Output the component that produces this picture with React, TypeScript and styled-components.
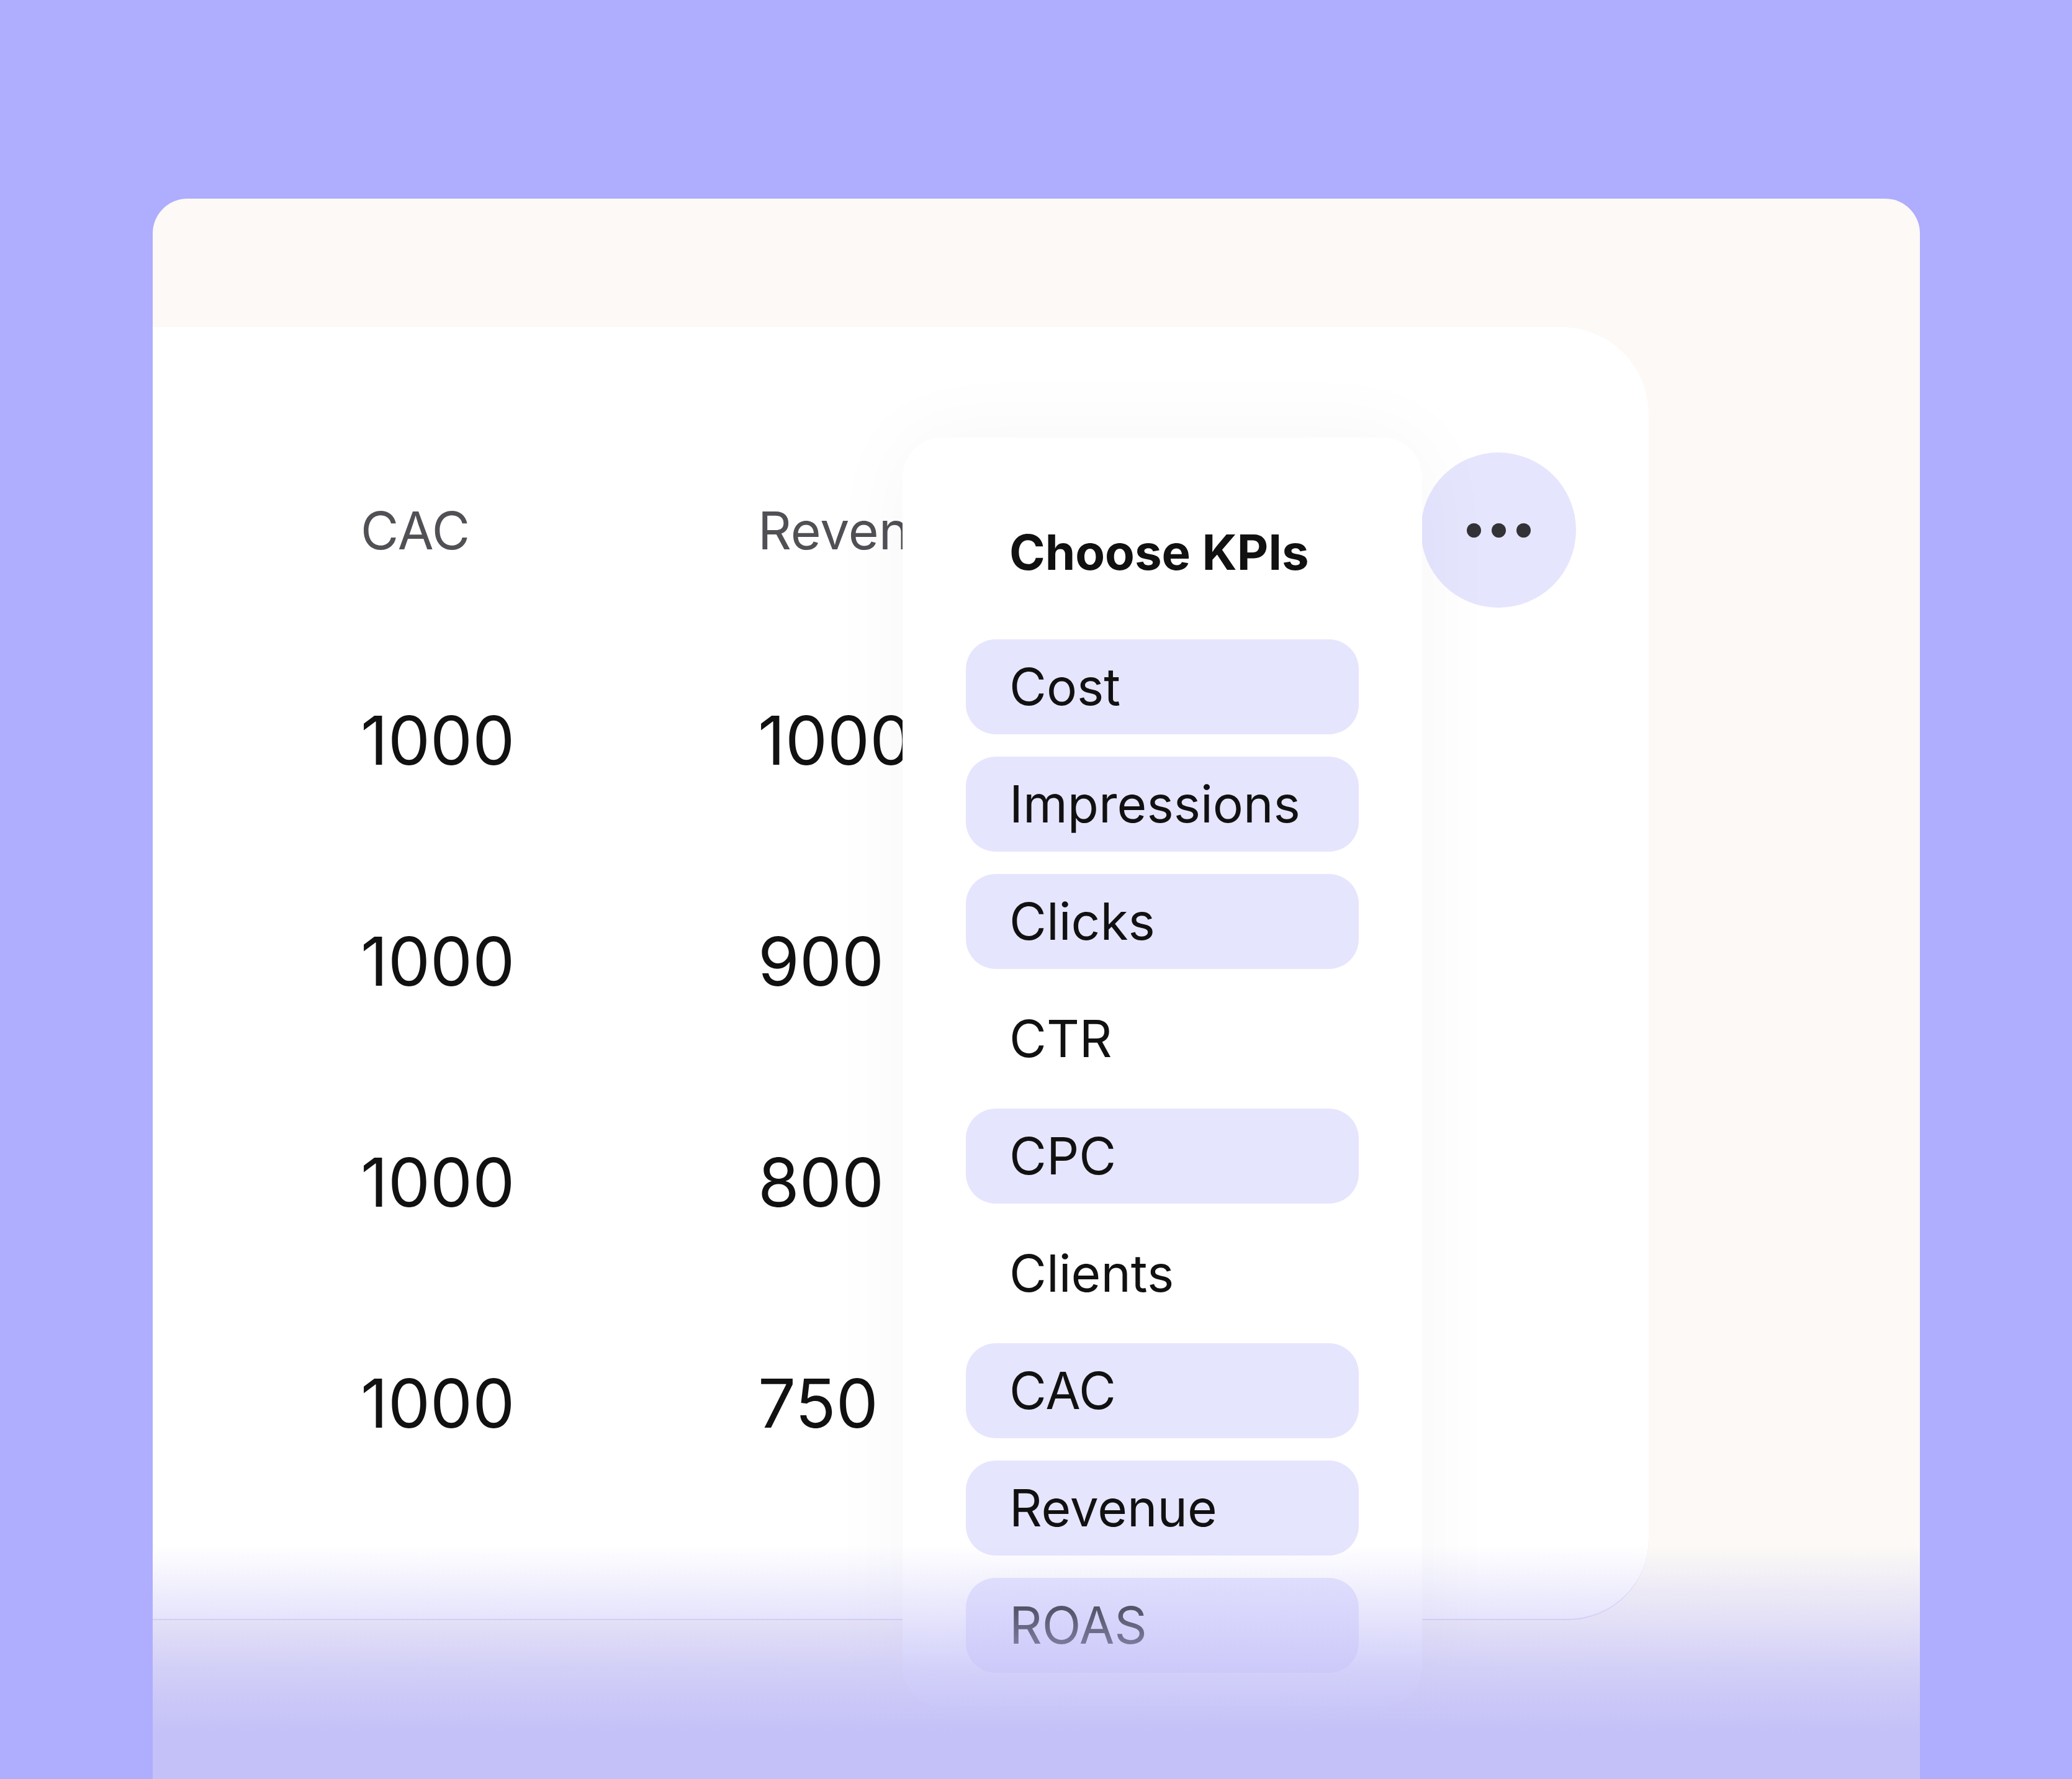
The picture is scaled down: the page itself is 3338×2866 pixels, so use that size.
import styled, { createGlobalStyle } from 'styled-components';

const GlobalStyle = createGlobalStyle`
  html, body {
    margin: 0;
    padding: 0;
  }
  body {
    background: #aeadfe;
    font-family: Inter, "Noto Sans", sans-serif;
    color: #111;
  }
`;

const Page = styled.div`
  width: 3338px;
  height: 2866px;
  overflow: hidden;
  padding: 320px 0 0 246px;
  box-sizing: border-box;
  background: #aeadfe;
`;

const Card = styled.div`
  position: relative;
  width: 2847px;
  height: 2600px;
  padding-top: 207px;
  box-sizing: border-box;
  background: #fcf9f6;
  border-radius: 56px 56px 0 0;
`;

const Panel = styled.div`
  width: 2410px;
  height: 2083px;
  display: flex;
  align-items: flex-start;
  background: #fff;
  border-radius: 0 140px 130px 0;
  border-bottom: 2px solid #dcdaf6;
  box-sizing: border-box;
`;

const Table = styled.div`
  width: 1208px;
  flex-shrink: 0;
  overflow: hidden;
  padding: 167px 0 0 335px;
  box-sizing: border-box;
  display: grid;
  grid-template-columns: 640px 640px;
  grid-template-rows: 320px repeat(4, 356px);
`;

const HeadCell = styled.div`
  display: flex;
  align-items: center;
  font-size: 84px;
  color: #505055;
  white-space: nowrap;
`;

const Cell = styled.div`
  display: flex;
  align-items: center;
  font-size: 108px;
  color: #111;
  white-space: nowrap;
`;

const Popup = styled.div`
  position: relative;
  z-index: 1;
  flex-shrink: 0;
  width: 837px;
  height: 2044px;
  margin-top: 178px;
  padding: 125px 102px 0;
  box-sizing: border-box;
  background: #fff;
  border-radius: 64px;
  box-shadow: 0 0 140px rgba(40, 30, 80, 0.04);
`;

const Title = styled.div`
  padding-left: 70px;
  font-size: 78px;
  font-weight: 700;
  line-height: 120px;
  color: #111;
`;

const List = styled.div`
  margin-top: 80px;
  display: flex;
  flex-direction: column;
  gap: 36px;
`;

const Chip = styled.div<{ $on: boolean }>`
  height: 153px;
  padding-left: 70px;
  display: flex;
  align-items: center;
  border-radius: 48px;
  font-size: 82px;
  color: #111;
  background: ${(p) => (p.$on ? '#e6e5fe' : 'transparent')};
`;

const MoreButton = styled.div`
  flex-shrink: 0;
  width: 250px;
  height: 250px;
  margin: 202px 0 0 -2px;
  border-radius: 50%;
  background: #e6e5fe;
  display: flex;
  align-items: center;
  justify-content: center;
  gap: 17px;
`;

const Dot = styled.span`
  width: 23px;
  height: 23px;
  border-radius: 50%;
  background: #333236;
`;

const Fade = styled.div`
  position: absolute;
  z-index: 2;
  left: 0;
  right: 0;
  top: 2170px;
  bottom: 0;
  pointer-events: none;
  background: linear-gradient(
    to bottom,
    rgba(196, 193, 248, 0) 0px,
    rgba(196, 193, 248, 0.75) 200px,
    rgba(196, 193, 248, 1) 300px
  );
`;

const rows = [
  ['1000', '1000'],
  ['1000', '900'],
  ['1000', '800'],
  ['1000', '750'],
];

const kpis = [
  { name: 'Cost', on: true },
  { name: 'Impressions', on: true },
  { name: 'Clicks', on: true },
  { name: 'CTR', on: false },
  { name: 'CPC', on: true },
  { name: 'Clients', on: false },
  { name: 'CAC', on: true },
  { name: 'Revenue', on: true },
  { name: 'ROAS', on: true },
];

export default function App() {
  return (
    <>
      <GlobalStyle />
      <Page>
        <Card>
          <Panel>
            <Table>
              <HeadCell>CAC</HeadCell>
              <HeadCell>Revenue</HeadCell>
              {rows.map((r, i) => [
                <Cell key={`a${i}`}>{r[0]}</Cell>,
                <Cell key={`b${i}`}>{r[1]}</Cell>,
              ])}
            </Table>
            <Popup>
              <Title>Choose KPIs</Title>
              <List>
                {kpis.map((k) => (
                  <Chip key={k.name} $on={k.on}>
                    {k.name}
                  </Chip>
                ))}
              </List>
            </Popup>
            <MoreButton>
              <Dot />
              <Dot />
              <Dot />
            </MoreButton>
          </Panel>
          <Fade />
        </Card>
      </Page>
    </>
  );
}
